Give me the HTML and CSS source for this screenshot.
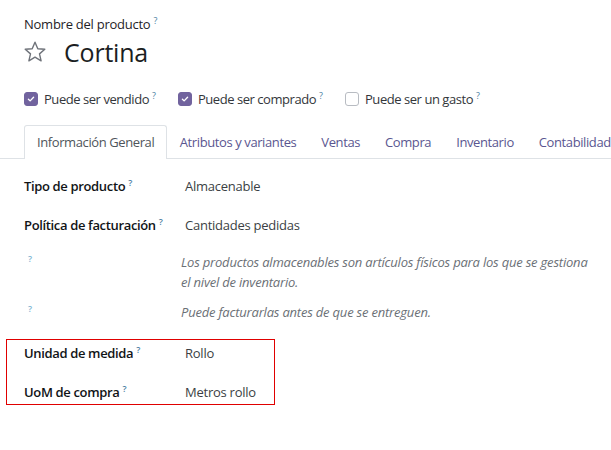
FILE: index.html
```html
<!DOCTYPE html>
<html lang="es">
<head>
<meta charset="utf-8">
<title>Cortina</title>
<link rel="stylesheet" href="styles.css">
</head>
<body>
<div class="sheet">
  <div class="head">
    <div class="name-label">Nombre del producto<sup class="q">?</sup></div>
    <div class="title-row">
      <svg class="star" viewBox="0 0 24 24" width="24" height="24" aria-hidden="true">
        <polygon points="12,2.2 14.8,8.7 21.8,9.3 16.5,13.9 18.1,20.8 12,17.2 5.9,20.8 7.5,13.9 2.2,9.3 9.2,8.7" fill="none" stroke="#6f737a" stroke-width="1.4" stroke-linejoin="round"/>
      </svg>
      <h1 class="title">Cortina</h1>
    </div>
    <div class="checks">
      <label class="check"><span class="box on"><svg viewBox="0 0 14 14" width="14" height="14"><path d="M4 7.2l2 2 4-4.2" fill="none" stroke="#fff" stroke-width="1.6" stroke-linecap="round" stroke-linejoin="round"/></svg></span>Puede ser vendido<sup class="q">?</sup></label>
      <label class="check"><span class="box on"><svg viewBox="0 0 14 14" width="14" height="14"><path d="M4 7.2l2 2 4-4.2" fill="none" stroke="#fff" stroke-width="1.6" stroke-linecap="round" stroke-linejoin="round"/></svg></span>Puede ser comprado<sup class="q">?</sup></label>
      <label class="check"><span class="box"></span>Puede ser un gasto<sup class="q">?</sup></label>
    </div>
  </div>
  <nav class="tabs">
    <span class="tab active">Información General</span>
    <span class="tab">Atributos y variantes</span>
    <span class="tab">Ventas</span>
    <span class="tab">Compra</span>
    <span class="tab">Inventario</span>
    <span class="tab">Contabilidad</span>
  </nav>
  <div class="form">
    <div class="row">
      <div class="lbl">Tipo de producto<sup class="q">?</sup></div>
      <div class="val">Almacenable</div>
    </div>
    <div class="row">
      <div class="lbl">Política de facturación<sup class="q">?</sup></div>
      <div class="val">Cantidades pedidas</div>
    </div>
    <div class="row help">
      <div class="lbl"><sup class="q light">?</sup></div>
      <div class="note">Los productos almacenables son artículos físicos para los que se gestiona el nivel de inventario.</div>
    </div>
    <div class="row help">
      <div class="lbl"><sup class="q light">?</sup></div>
      <div class="note">Puede facturarlas antes de que se entreguen.</div>
    </div>
    <div class="marked">
      <div class="row first">
        <div class="lbl">Unidad de medida<sup class="q">?</sup></div>
        <div class="val">Rollo</div>
      </div>
      <div class="row last">
        <div class="lbl">UoM de compra<sup class="q">?</sup></div>
        <div class="val">Metros rollo</div>
      </div>
    </div>
  </div>
</div>
</body>
</html>
```

FILE: styles.css
```css
* { box-sizing: border-box; }
html, body { margin: 0; padding: 0; background: #fff; }
body {
  font-family: "Open Sans", "Noto Sans", sans-serif;
  font-size: 13px;
  color: #212529;
  overflow: hidden;
  width: 611px;
  height: 450px;
}
.sheet { width: 611px; }
.head { padding: 15px 0 0 24px; }
.name-label { line-height: 18px; color: #1f2328; letter-spacing: -0.25px; }
.q {
  font-size: 9px;
  color: #4c7fa3;
  margin-left: 3px;
  vertical-align: top;
  position: relative;
  top: -3px;
  letter-spacing: 0;
}
.q.light { color: #7db4d2; margin-left: 4px; }
.title-row {
  display: flex;
  align-items: center;
  gap: 17px;
  margin-top: 3px;
  height: 32px;
}
.star { width: 24px; height: 24px; margin-left: -1px; }
.title {
  margin: 0;
  font-size: 25px;
  font-weight: 400;
  line-height: 32px;
  color: #1b1e22;
  letter-spacing: -0.2px;
}
.checks {
  display: flex;
  gap: 22px;
  margin-top: 21px;
  line-height: 20px;
  color: #33363a;
}
.check { display: flex; align-items: center; letter-spacing: -0.45px; }
.box {
  width: 14px; height: 14px;
  border-radius: 3px;
  border: 1px solid #b8bcc2;
  margin-right: 6px;
  display: inline-flex;
  background: #fff;
}
.box.on { background: #71639e; border-color: #71639e; }
.box svg { width: 12px; height: 12px; }
.tabs {
  display: flex;
  margin-top: 16px;
  padding-left: 24px;
  border-bottom: 1px solid #dee2e6;
  height: 34px;
  white-space: nowrap;
}
.tab {
  padding: 0 11.5px;
  line-height: 32px;
  color: #5a5690;
  border: 1px solid transparent;
  border-bottom: none;
  letter-spacing: -0.4px;
  flex: none;
}
.tab.active {
  padding: 0 12px;
  color: #4f555b;
  background: #fff;
  border-color: #dee2e6;
  border-radius: 3px 3px 0 0;
  height: 34px;
}
.form { padding-left: 24px; }
.row {
  display: grid;
  grid-template-columns: 157px 1fr;
  line-height: 20px;
  padding: 9.5px 0;
}
.row:first-child { padding-top: 16.5px; }
.lbl { font-weight: 600; color: #111417; letter-spacing: -0.35px; }
.val { padding-left: 4px; color: #3b3f44; letter-spacing: -0.25px; }
.help { padding: 8px 0 2px; }
.note {
  font-style: italic;
  color: #6b7076;
  padding-right: 20px;
  letter-spacing: -0.2px;
}
.marked {
  margin: 15px 0 0 -18px;
  width: 269px;
  border: 1px solid #e00000;
  padding: 3px 0 2px 17px;
}
.marked .row.first { padding: 0 0 9.5px; }
.marked .row.last { padding: 9.5px 0 0; }
```
